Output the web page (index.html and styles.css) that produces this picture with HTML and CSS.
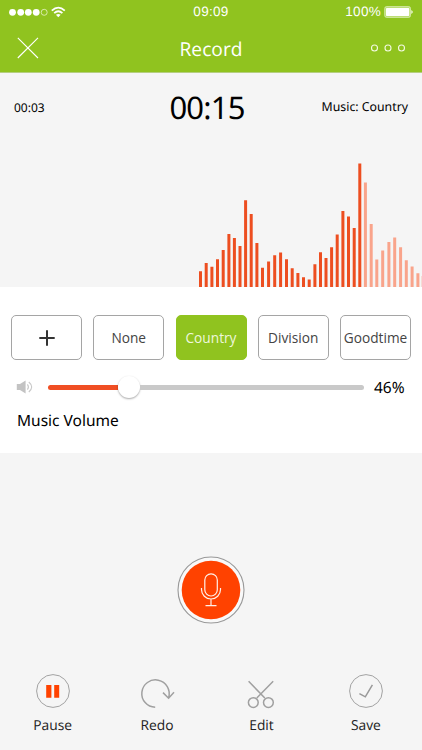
FILE: index.html
```html
<!DOCTYPE html>
<html lang="en">
<head>
    <meta charset="UTF-8">
    <meta name="viewport" content="width=device-width, initial-scale=1.0">
    <title>Record</title>
    <link rel="stylesheet" href="styles.css">
</head>
<body>
    <header class="header">
        <div class="status">
            <svg class="signal" width="60" height="14" viewBox="0 0 60 14">
                <g fill="#fff">
                    <circle cx="4.5" cy="7.3" r="3.4"/>
                    <circle cx="12.7" cy="7.3" r="3.4"/>
                    <circle cx="20.3" cy="7.3" r="3.4"/>
                    <circle cx="28.2" cy="7.3" r="3.4"/>
                </g>
                <circle cx="36.2" cy="7.3" r="3" fill="none" stroke="#e8f4c8" stroke-width=".8"/>
                <g fill="none" stroke="#fff" stroke-width="1.8">
                    <path d="M43.8 5.7Q50.3-.5 56.8 5.7"/>
                    <path d="M46.2 8.2Q50.3 4.4 54.4 8.2"/>
                </g>
                <path d="M47.9 9.8Q50.3 8 52.7 9.8L50.3 12.3Z" fill="#fff"/>
            </svg>
            <span class="clock">09:09</span>
            <div class="power">
                <span>100%</span>
                <svg width="30" height="14" viewBox="0 0 30 14">
                    <rect x=".7" y="1.6" width="25.8" height="10.8" rx="1.8" fill="#b9dc70" stroke="#e4f2c4" stroke-width=".7"/>
                    <rect x="2" y="2.9" width="23.2" height="8.2" rx=".8" fill="#fff"/>
                    <path d="M27.4 5Q30 7 27.4 9Z" fill="#fff"/>
                </svg>
            </div>
        </div>
        <div class="titlebar">
            <svg width="22" height="22" viewBox="0 0 22 22"><path d="M.8.8 21 21M21 .8.8 21" stroke="#fff" stroke-width="1.1"/></svg>
            <h1 class="title">Record</h1>
            <svg width="36" height="10" viewBox="0 0 36 10">
                <g fill="none" stroke="#f2f9e0" stroke-width="1.1">
                    <circle cx="4.5" cy="5" r="3"/>
                    <circle cx="18" cy="5" r="3"/>
                    <circle cx="31.5" cy="5" r="3"/>
                </g>
            </svg>
        </div>
    </header>

    <section class="recording">
        <div class="times">
            <span class="elapsed">00:03</span>
            <span class="total">00:15</span>
            <span class="track">Music: Country</span>
        </div>
        <svg class="wave" width="422" height="137" viewBox="0 0 422 137">
            <!-- played -->
            <path class="played" d="M200.5 137V121.3M206.2 137V113M211.9 137V116.7M217.5 137V109.3M223.2 137V100M228.9 137V84M234.4 137V88M240 137V96M245.6 137V50.3M251.2 137V64M256.9 137V93M262.5 137V117.7M268.6 137V111.5M274.7 137V105.3M280.6 137V102.5M286.5 137V109.3M292.2 137V118.3M297.9 137V123M303.5 137V127.3M309.2 137V129.6M314.9 137V114.3M320.5 137V102.3M326 137V108M331.6 137V97.3M337.2 137V84.5M342.9 137V61M348.5 137V66.5M354.2 137V78M359.8 137V13.4"/>
            <!-- remaining -->
            <path class="remaining" d="M365.4 137V32.6M371.2 137V74M376.8 137V109.5M382.7 137V100.6M388.9 137V92M394.7 137V87.6M400.6 137V97.3M406.3 137V110.3M412.1 137V116.6M417.9 137V123.3M423.2 137V126"/>
        </svg>
    </section>

    <section class="music">
        <div class="tracks">
            <button class="option">
                <svg width="16" height="16" viewBox="0 0 16 16"><path d="M8 .3V15.7M.3 8H15.7" stroke="#333" stroke-width="2"/></svg>
            </button>
            <button class="option">None</button>
            <button class="option active">Country</button>
            <button class="option">Division</button>
            <button class="option">Goodtime</button>
        </div>
        <div class="volume">
            <svg class="speaker" width="18" height="14" viewBox="0 0 18 14">
                <path d="M.8 4H4L9.6.4V13.6L4 10H.8Z" fill="#c3c3c3"/>
                <path d="M11.4 4.3Q13.5 7 11.4 9.7M12.8 2Q18.6 7 12.8 12" fill="none" stroke="#c8c8c8" stroke-width="1.1"/>
            </svg>
            <div class="slider">
                <div class="fill"></div>
                <div class="knob"></div>
                <div class="rest"></div>
            </div>
            <span class="percent">46%</span>
        </div>
        <h2 class="label">Music Volume</h2>
    </section>

    <section class="controls">
        <div class="mic">
            <svg width="68" height="68" viewBox="0 0 68 68">
                <circle cx="34" cy="34" r="33" fill="#f9f9f9" stroke="#999" stroke-width="1.1"/>
                <circle cx="34" cy="34" r="29.3" fill="#ff4200"/>
                <g fill="none" stroke="#fff0e8" stroke-width="1.2">
                    <rect x="27.8" y="17.8" width="12.5" height="22.2" rx="6.2"/>
                    <path d="M24.5 32V33.5A9.5 9.5 0 0 0 43.5 33.5V32M34 43V49.7M28.5 49.7H39.5"/>
                </g>
            </svg>
        </div>
        <nav class="actions">
            <div class="action">
                <svg width="36" height="36" viewBox="0 0 36 36">
                    <circle cx="18" cy="18" r="16.4" fill="none" stroke="#999" stroke-width=".9"/>
                    <path d="M11.2 12H16.4V24.7H11.2ZM19.2 12H24.2V24.7H19.2Z" fill="#ff4200"/>
                </svg>
                <span>Pause</span>
            </div>
            <div class="action">
                <svg width="36" height="36" viewBox="0 0 36 36">
                    <path d="M16.2 34.3A13.7 13.7 0 1 1 29.6 24.6M24 19.6 29.6 25.2 35 19.3" fill="none" stroke="#a0a0a0" stroke-width="1.5"/>
                </svg>
                <span>Redo</span>
            </div>
            <div class="action">
                <svg width="36" height="36" viewBox="0 0 36 36">
                    <g fill="none" stroke="#a0a0a0" stroke-width="1.5">
                        <path d="M5.6 8.2 21.8 25M30.2 8.2 13.8 25"/>
                        <circle cx="10.3" cy="29.6" r="4.9"/>
                        <circle cx="25.4" cy="29.6" r="4.9"/>
                    </g>
                </svg>
                <span>Edit</span>
            </div>
            <div class="action">
                <svg width="36" height="36" viewBox="0 0 36 36">
                    <circle cx="18" cy="18" r="16.4" fill="none" stroke="#999" stroke-width=".9"/>
                    <path d="M11.4 20.6 17.3 23.8 24.4 11.8" fill="none" stroke="#999" stroke-width="1.5"/>
                </svg>
                <span>Save</span>
            </div>
        </nav>
    </section>
</body>
</html>
```

FILE: styles.css
```css
* {
    box-sizing: border-box;
}
body {
    margin: 0;
    width: 422px;
    height: 750px;
    overflow: hidden;
    background-color: #f5f5f5;
    color: #000;
    font-family: "Noto Sans", "Open Sans", sans-serif;
    text-rendering: geometricPrecision;
}
svg {
    display: block;
    flex: none;
}
.header {
    height: 73px;
    background-color: #90c31f;
    border-bottom: 1px solid #b5ce80;
    color: #fff;
}
.status {
    display: grid;
    grid-template-columns: 1fr auto 1fr;
    align-items: center;
    height: 23px;
    padding: 0 8px;
    font-family: "Liberation Sans", Arial, sans-serif;
    font-size: 13.5px;
}
.clock {
    letter-spacing: 0.3px;
}
.power {
    display: flex;
    align-items: center;
    justify-content: flex-end;
    gap: 3px;
    letter-spacing: 0.3px;
}
.titlebar {
    display: flex;
    align-items: center;
    justify-content: space-between;
    height: 50px;
    padding: 0 16px 0 17px;
}
.title {
    margin: 0 0 0 13px;
    font-family: "Open Sans", sans-serif;
    font-size: 19.2px;
    font-weight: 400;
}
.recording {
    display: flex;
    flex-direction: column;
    justify-content: space-between;
    height: 214px;
}
.times {
    display: grid;
    grid-template-columns: 85px 1fr 85px;
    align-items: center;
    height: 69px;
    padding: 0 14px;
    white-space: nowrap;
}
.elapsed {
    font-size: 12px;
}
.total {
    padding-right: 8px;
    text-align: center;
    font-size: 31px;
    letter-spacing: -0.8px;
}
.track {
    justify-self: end;
    margin-top: -2px;
    font-size: 12.3px;
}
.wave path {
    stroke-width: 3;
}
.played {
    stroke: #ed4e20;
}
.remaining {
    stroke: #f9a48b;
}
.music {
    height: 166px;
    padding: 28px 11px 0;
    background-color: #fff;
}
.tracks {
    display: grid;
    grid-template-columns: repeat(5, 71px);
    justify-content: space-between;
}
.option {
    display: flex;
    align-items: center;
    justify-content: center;
    height: 45px;
    padding: 0;
    border: 1px solid #a5a5a5;
    border-radius: 5px;
    background-color: #fff;
    color: #444;
    font-family: "Open Sans", sans-serif;
    font-size: 13.7px;
}
.option.active {
    border-color: #90c31f;
    background-color: #90c31f;
    color: #eef7dc;
}
.volume {
    display: flex;
    align-items: center;
    height: 24px;
    margin-top: 15px;
    padding-left: 5px;
}
.slider {
    display: flex;
    align-items: center;
    width: 316px;
    margin-left: 14px;
}
.fill {
    width: 70px;
    height: 5px;
    border-radius: 3px 0 0 3px;
    background-color: #f04e23;
}
.knob {
    width: 22px;
    height: 22px;
    border-radius: 50%;
    background-color: #fff;
    box-shadow: 0 1px 2px rgba(0, 0, 0, 0.35);
}
.rest {
    flex: 1;
    height: 5px;
    border-radius: 0 3px 3px 0;
    background-color: #c9c9c9;
}
.percent {
    margin-left: 10px;
    font-size: 15.5px;
}
.label {
    margin: 10px 0 0 6px;
    font-size: 15.5px;
    font-weight: 400;
    line-height: 22px;
}
.controls {
    padding-top: 103px;
}
.mic {
    display: flex;
    justify-content: center;
}
.actions {
    display: grid;
    grid-template-columns: repeat(4, 104.4px);
    margin-top: 49px;
    padding-left: 0.5px;
}
.action {
    display: flex;
    flex-direction: column;
    align-items: center;
    gap: 7px;
    color: #222;
    font-family: "Open Sans", sans-serif;
    font-size: 13.8px;
    line-height: 20px;
}
```
